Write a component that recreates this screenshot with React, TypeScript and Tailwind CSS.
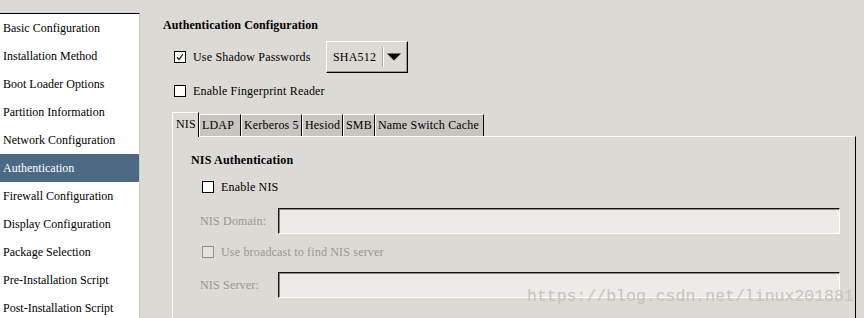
import React from "react";

function CheckBox({ checked = false, disabled = false }: { checked?: boolean; disabled?: boolean }) {
  return (
    <div
      className={
        "w-[12px] h-[12px] shrink-0 border flex items-center justify-center " +
        (disabled ? "border-[#8f8d89] bg-[#e4e2de]" : "border-black bg-white")
      }
    >
      {checked && (
        <svg width="10" height="10" viewBox="0 0 10 10">
          <path d="M2 5.2 L4 7.6 L7.8 2.2" fill="none" stroke="#000" strokeWidth="1.1" />
        </svg>
      )}
    </div>
  );
}

function TextInput() {
  return (
    <div className="flex-1 h-[26px] bg-[#edebe7] border-t border-l border-[#111] border-r-white border-b-white border-r border-b shadow-[inset_1px_1px_0_#8e8c88]" />
  );
}

const items = [
  "Basic Configuration",
  "Installation Method",
  "Boot Loader Options",
  "Partition Information",
  "Network Configuration",
  "Authentication",
  "Firewall Configuration",
  "Display Configuration",
  "Package Selection",
  "Pre-Installation Script",
  "Post-Installation Script",
];

const tabs = [
  { label: "NIS", w: "w-[27px]" },
  { label: "LDAP", w: "w-[42px]" },
  { label: "Kerberos 5", w: "w-[61px]" },
  { label: "Hesiod", w: "w-[41px]" },
  { label: "SMB", w: "w-[32px]" },
  { label: "Name Switch Cache", w: "w-[109px]" },
];

export default function App() {
  return (
    <div className="relative flex w-[864px] h-[318px] overflow-hidden bg-[#dcdad5] text-[12px] leading-[14px] text-black [font-family:'Liberation_Serif',serif]">
      {/* Sidebar */}
      <aside className="mt-[13px] w-[140px] shrink-0 bg-white border-t border-black border-r border-r-[#cbc9c4]">
        {items.map((it) => (
          <div
            key={it}
            className={
              "h-[28px] flex items-center pl-[3px] whitespace-nowrap " +
              (it === "Authentication" ? "bg-[#4b6983] text-white" : "")
            }
          >
            {it}
          </div>
        ))}
      </aside>

      {/* Main */}
      <main className="flex-1 flex flex-col pl-[23px] pt-[18px] min-w-0 tracking-[0.18px]">
        <div className="font-bold h-[14px] tracking-[0.1px]">Authentication Configuration</div>

        <div className="mt-[9px] h-[32px] flex items-center pl-[11px]">
          <CheckBox checked />
          <span className="ml-[7px] w-[133px] whitespace-nowrap">Use Shadow Passwords</span>
          <div className="w-[82px] h-[32px] flex items-center border border-t-white border-l-white border-r-black border-b-black shadow-[inset_-1px_-1px_0_#9a9893]">
            <span className="pl-[6px] w-[55px]">SHA512</span>
            <div className="w-[2px] h-[20px] border-l border-[#a8a6a1] bg-white" />
            <svg width="16" height="10" viewBox="0 0 16 10" className="ml-[2px]">
              <path d="M1 1.5 L15 1.5 L8 8.5 Z" fill="#000" />
            </svg>
          </div>
        </div>

        <div className="mt-[11px] h-[14px] flex items-center pl-[11px]">
          <CheckBox />
          <span className="ml-[7px] whitespace-nowrap">Enable Fingerprint Reader</span>
        </div>

        {/* Tabs */}
        <div className="mt-[14px] ml-[9px] mr-[8px] flex flex-col flex-1">
          <div className="flex h-[24px] items-end">
            {tabs.map((t, i) =>
              i === 0 ? (
                <div
                  key={t.label}
                  className={t.w + " h-[25px] -mb-[1px] relative z-10 bg-[#dcdad5] border-t border-l border-white border-r border-r-black pl-[3px] pt-[4px] whitespace-nowrap"}
                >
                  {t.label}
                </div>
              ) : (
                <div
                  key={t.label}
                  className={t.w + " h-[22px] bg-[#c8c5bf] border-t border-l border-white border-r border-r-black pl-[2px] pt-[3px] whitespace-nowrap overflow-hidden"}
                >
                  {t.label}
                </div>
              )
            )}
          </div>
          <div className="flex-1 flex flex-col bg-[#dcdad5] border-t border-l border-white border-r border-r-black pl-[18px] pt-[16px]">
            <div className="font-bold h-[14px]">NIS Authentication</div>
            <div className="mt-[13px] h-[14px] flex items-center pl-[11px]">
              <CheckBox />
              <span className="ml-[7px]">Enable NIS</span>
            </div>
            <div className="mt-[14px] flex items-center pl-[9px] mr-[15px]">
              <span className="w-[78px] text-[#999791] whitespace-nowrap">NIS Domain:</span>
              <TextInput />
            </div>
            <div className="mt-[11px] h-[14px] flex items-center pl-[11px]">
              <CheckBox disabled />
              <span className="ml-[7px] text-[#999791] whitespace-nowrap">Use broadcast to find NIS server</span>
            </div>
            <div className="mt-[13px] flex items-center pl-[9px] mr-[15px]">
              <span className="w-[78px] text-[#999791] whitespace-nowrap">NIS Server:</span>
              <TextInput />
            </div>
          </div>
        </div>
      </main>

      {/* Watermark */}
      <div className="absolute left-[527px] top-[287px] [font-family:'Liberation_Mono',monospace] text-[16.5px] leading-[20px] text-[#c6c4c0] whitespace-nowrap pointer-events-none">
        https://blog.csdn.net/linux201881
      </div>
    </div>
  );
}
